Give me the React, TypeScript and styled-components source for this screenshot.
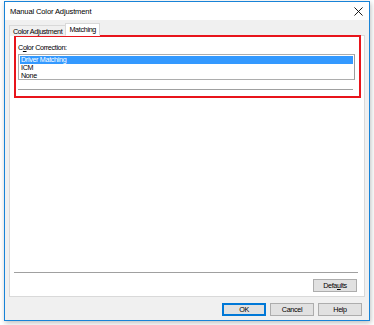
import styled, { createGlobalStyle } from "styled-components";

const GlobalStyle = createGlobalStyle`
	html, body {
		margin: 0;
		padding: 0;
		background: #ffffff;
	}
	body {
		font-family: "Liberation Sans", Arial, sans-serif;
		font-size: 7.2px;
		letter-spacing: -0.33px;
		color: #000;
	}
`;

const Page = styled.div`
	width: 374px;
	height: 325px;
	padding: 1px 0 0 4px;
	box-sizing: border-box;
`;

const Window = styled.div`
	width: 366px;
	height: 320px;
	box-sizing: border-box;
	border: 1px solid #1883d7;
	background: #f0f0f0;
	box-shadow: 1px 2px 5px rgba(0, 0, 0, 0.25);
	display: flex;
	flex-direction: column;
`;

const TitleBar = styled.div`
	height: 18px;
	background: #ffffff;
	display: flex;
	align-items: center;
	justify-content: space-between;
	padding: 0 6px 0 5px;
	font-size: 7.6px;
	letter-spacing: -0.15px;
`;

const CloseIcon = styled.svg`
	width: 9px;
	height: 9px;
`;

const Body = styled.div`
	flex: 1;
	display: flex;
	flex-direction: column;
	padding: 3px 4px 0 4px;
`;

const TabStrip = styled.div`
	display: flex;
	align-items: flex-end;
	height: 13px;
	position: relative;
	z-index: 1;
`;

const Tab = styled.div<{ $active?: boolean }>`
	height: ${(p) => (p.$active ? "13px" : "11px")};
	box-sizing: border-box;
	border: 1px solid #d9d9d9;
	border-bottom: ${(p) => (p.$active ? "1px solid #fff" : "none")};
	background: ${(p) => (p.$active ? "#ffffff" : "#f0f0f0")};
	padding: ${(p) => (p.$active ? "0 3px 1px 3px" : "0 3px")};
	display: flex;
	align-items: center;
	margin-left: ${(p) => (p.$active ? "-1px" : "0")};
`;

const Panel = styled.div`
	height: 262px;
	box-sizing: border-box;
	background: #ffffff;
	border: 1px solid #d9d9d9;
	margin-top: -1px;
	padding: 0 3px 0 4px;
	display: flex;
	flex-direction: column;
`;

const Highlight = styled.div`
	border: 2px solid #e8141b;
	height: 63px;
	box-sizing: border-box;
	padding: 6px 3px 0 2px;
	margin-top: -1px;
`;

const Label = styled.div`
	line-height: 9px;
	margin-bottom: 2px;
	u {
		text-decoration: underline;
	}
`;

const ListBox = styled.div`
	height: 26px;
	box-sizing: border-box;
	border: 1px solid #adadad;
	border-right-color: #9c9c9c;
	padding: 1px;
	margin-right: 1px;
`;

const ListItem = styled.div<{ $selected?: boolean }>`
	height: 8px;
	line-height: 8px;
	padding-left: 1px;
	background: ${(p) => (p.$selected ? "#3399ff" : "transparent")};
	color: ${(p) => (p.$selected ? "#ffffff" : "#000")};
`;

const Separator = styled.div<{ $top: number }>`
	height: 1px;
	background: #a0a0a0;
	margin-top: ${(p) => p.$top}px;
	margin-right: 3px;
`;

const Spacer = styled.div`
	flex: 1;
`;

const DefaultsRow = styled.div`
	display: flex;
	justify-content: flex-end;
	padding: 6px 4px 4px 0;
`;

const Button = styled.div<{ $default?: boolean }>`
	width: 44px;
	height: 13px;
	box-sizing: border-box;
	border: 1px solid ${(p) => (p.$default ? "#0078d7" : "#adadad")};
	background: #e1e1e1;
	display: flex;
	align-items: center;
	justify-content: center;
	${(p) => (p.$default ? "box-shadow: inset 0 0 0 1px #0078d7;" : "")}
`;

const ButtonRow = styled.div`
	display: flex;
	justify-content: flex-end;
	gap: 4px;
	padding: 6px 3px 0 0;
`;

export default function App() {
	return (
		<>
			<GlobalStyle />
			<Page>
				<Window>
					<TitleBar>
						<span>Manual Color Adjustment</span>
						<CloseIcon viewBox="0 0 10 10">
							<path d="M0.5 0.5 L9.5 9.5 M9.5 0.5 L0.5 9.5" stroke="#000" strokeWidth="1" />
						</CloseIcon>
					</TitleBar>
					<Body>
						<TabStrip>
							<Tab>Color Adjustment</Tab>
							<Tab $active>Matching</Tab>
						</TabStrip>
						<Panel>
							<Highlight>
								<Label>
									C<u>o</u>lor Correction:
								</Label>
								<ListBox>
									<ListItem $selected>Driver Matching</ListItem>
									<ListItem>ICM</ListItem>
									<ListItem>None</ListItem>
								</ListBox>
								<Separator $top={9} />
							</Highlight>
							<Spacer />
							<Separator $top={0} />
							<DefaultsRow>
								<Button>
									<span>
										Defa<u>u</u>lts
									</span>
								</Button>
							</DefaultsRow>
						</Panel>
						<ButtonRow>
							<Button $default>OK</Button>
							<Button>Cancel</Button>
							<Button>Help</Button>
						</ButtonRow>
					</Body>
				</Window>
			</Page>
		</>
	);
}
